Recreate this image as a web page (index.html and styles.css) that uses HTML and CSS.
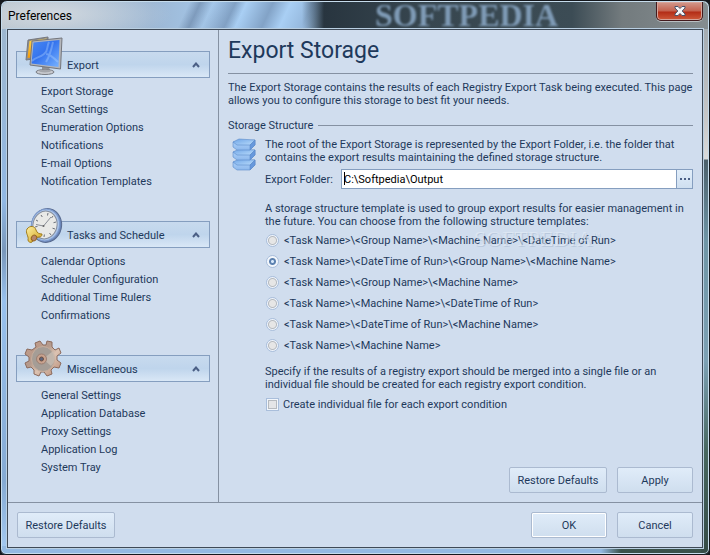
FILE: index.html
```html
<!DOCTYPE html>
<html lang="en">
<head>
<meta charset="utf-8">
<title>Preferences</title>
<link rel="stylesheet" href="styles.css">
</head>
<body>
<div class="window">
  <header class="titlebar">
    <span class="titlebar-name">Preferences</span>
    <span class="titlebar-ghost" aria-hidden="true">SOFTPEDIA</span>
    <button class="close" type="button" aria-label="Close">
      <svg width="12" height="10" viewBox="0 0 12 10"><path d="M1 .5h3l2 2 2-2h3v1.500L8.200 5 11 8v1.500H8l-2-2-2 2H1V8l2.800-3L1 2z" fill="#f4f4f6" stroke="#49536b" stroke-width="1"/></svg>
    </button>
  </header>
  <div class="client">
    <div class="columns">
      <nav class="sidebar" aria-label="Preference pages">
        <section class="group">
          <h2 class="group-head">
            <svg class="group-icon" width="40" height="40" viewBox="0 0 40 40">
              <defs>
                <linearGradient id="screen" x1="0" y1="0" x2="1" y2="1"><stop offset="0" stop-color="#4b8af2"/><stop offset=".45" stop-color="#3473ee"/><stop offset="1" stop-color="#79b4ff"/></linearGradient>
                <linearGradient id="amber" x1="0" y1="0" x2="0" y2="1"><stop offset="0" stop-color="#ffd84e"/><stop offset="1" stop-color="#f59a08"/></linearGradient>
              </defs>
              <path d="M4 4 24 1v20L2 24z" fill="#8b8c90" stroke="#77787d"/>
              <path d="M5.500 5 22.500 2.500v17L3.500 22z" fill="url(#amber)"/>
              <path d="M18 30h7l1 5h-8z" fill="#8f9195"/>
              <ellipse cx="21" cy="36" rx="9" ry="2.500" fill="#c9cbd0" stroke="#777a80"/>
              <ellipse cx="21" cy="35" rx="6" ry="1.500" fill="#a4a6ab"/>
              <path d="M8 5 38 2l-1.500 31L6 29z" fill="#b4b6bb" stroke="#74767c"/>
              <path d="M9.500 6.500 35.500 4 34.500 31 7.500 27.500z" fill="url(#screen)"/>
              <path d="M25 6c-3 6 0 8-5 12s-8 3-12 7M22 18c4 0 8 4 12 8M29 6c-2 9-3 14-7 20" fill="none" stroke="#b9dbff" stroke-width="2" stroke-opacity=".35"/>
            </svg>
            <button class="group-toggle" type="button" aria-expanded="true">Export
              <svg class="chevron" width="8" height="6" viewBox="0 0 8 6"><path d="M1 5l3-3.500L7 5" fill="none" stroke="#4b5f85" stroke-width="2"/></svg>
            </button>
          </h2>
          <ul class="links">
            <li><a href="#storage">Export Storage</a></li>
            <li><a href="#scan">Scan Settings</a></li>
            <li><a href="#enumeration">Enumeration Options</a></li>
            <li><a href="#notifications">Notifications</a></li>
            <li><a href="#email">E-mail Options</a></li>
            <li><a href="#templates">Notification Templates</a></li>
          </ul>
        </section>
        <section class="group">
          <h2 class="group-head">
            <svg class="group-icon" width="40" height="40" viewBox="0 0 40 40">
              <defs><linearGradient id="bell" x1="0" y1="0" x2="1" y2="1"><stop offset="0" stop-color="#fff0a0"/><stop offset="1" stop-color="#cfa01e"/></linearGradient></defs>
              <ellipse cx="22.500" cy="19.500" rx="15" ry="17" fill="#6b86b8" stroke="#586a8f" transform="rotate(14 22.500 19.500)"/>
              <ellipse cx="21.500" cy="19" rx="14" ry="16" fill="#a9c3ea" stroke="#7f9cce" transform="rotate(14 21.500 19)"/>
              <ellipse cx="21" cy="19" rx="12" ry="14" fill="#e9e9e7" stroke="#858d9c" transform="rotate(14 21 19)"/>
              <path d="M24 7l-.5 2.500M29 10l-1.500 2M32 16l-2.500.7M31 23l-2.500-.8M27 29l-1.500-2M20 31l.4-2.500M11 21l2.500-.6M12 14l2 1.200M17 9l1.300 2" stroke="#6c7079" fill="none"/>
              <path d="M27 11 19.500 20 12 18.500" stroke="#8b8f98" fill="none"/><circle cx="19.500" cy="20" r="1" fill="#666"/>
              <path d="M3 23c3-4 8-3 9 1 1 3 3 4 6 4 0 2-1 3-3 3-3 0-5 2-7 5-1 1-4 0-4-2 1-4-3-7-1-11z" fill="url(#bell)" stroke="#a07c1c"/>
              <ellipse cx="10" cy="32" rx="2.500" ry="3" fill="#b7846b" stroke="#96651f" transform="rotate(35 10 32)"/>
            </svg>
            <button class="group-toggle" type="button" aria-expanded="true">Tasks and Schedule
              <svg class="chevron" width="8" height="6" viewBox="0 0 8 6"><path d="M1 5l3-3.500L7 5" fill="none" stroke="#4b5f85" stroke-width="2"/></svg>
            </button>
          </h2>
          <ul class="links">
            <li><a href="#calendar">Calendar Options</a></li>
            <li><a href="#scheduler">Scheduler Configuration</a></li>
            <li><a href="#rulers">Additional Time Rulers</a></li>
            <li><a href="#confirmations">Confirmations</a></li>
          </ul>
        </section>
        <section class="group">
          <h2 class="group-head">
            <svg class="group-icon" width="40" height="40" viewBox="0 0 40 40">
              <defs><linearGradient id="gear" x1="0" y1="0" x2="1" y2="1"><stop offset="0" stop-color="#c69b87"/><stop offset=".4" stop-color="#b49a8c"/><stop offset=".6" stop-color="#dcc3b2"/><stop offset="1" stop-color="#b58873"/></linearGradient></defs>
              <path d="M12 7 11 3l5-2 3 4h3l1-4 5 1v5l3 3 4-2 2 5-4 3v4l4 3-2 5-5-1-3 3 1 4-5 2-3-4h-3l-2 4-5-2v-4l-3-3-4 1-2-5 4-2v-4l-4-3 2-5 5 1z" fill="url(#gear)" stroke="#8b6a5c" stroke-linejoin="round"/>
              <ellipse cx="19" cy="19" rx="11.500" ry="12.500" fill="#a59d96" stroke="#c6ad9c"/>
              <path d="M19 19 29 11c3 5 2 11-2 15z" fill="#cdc1b5" opacity=".7"/>
              <circle cx="17.500" cy="19" r="5" fill="#c8a28e" stroke="#9b7f72"/>
              <circle cx="17.500" cy="19" r="2" fill="#5b6680" stroke="#6e4f42"/>
            </svg>
            <button class="group-toggle" type="button" aria-expanded="true">Miscellaneous
              <svg class="chevron" width="8" height="6" viewBox="0 0 8 6"><path d="M1 5l3-3.500L7 5" fill="none" stroke="#4b5f85" stroke-width="2"/></svg>
            </button>
          </h2>
          <ul class="links">
            <li><a href="#general">General Settings</a></li>
            <li><a href="#database">Application Database</a></li>
            <li><a href="#proxy">Proxy Settings</a></li>
            <li><a href="#log">Application Log</a></li>
            <li><a href="#tray">System Tray</a></li>
          </ul>
        </section>
      </nav>
      <main class="page">
        <h1 class="page-title">Export Storage</h1>
        <p class="intro">The Export Storage contains the results of each Registry Export Task being executed. This page<br>allows you to configure this storage to best fit your needs.</p>
        <h2 class="section-title">Storage Structure</h2>
        <div class="section">
          <svg class="section-icon" width="28" height="34" viewBox="0 0 28 34">
            <defs>
              <linearGradient id="top" x1="0" y1="0" x2="1" y2="1"><stop offset="0" stop-color="#6ea4e6"/><stop offset="1" stop-color="#b9dbfb"/></linearGradient>
              <linearGradient id="face" x1="0" y1="0" x2="0" y2="1"><stop offset="0" stop-color="#b4d6fb"/><stop offset="1" stop-color="#8db8ec"/></linearGradient>
            </defs>
            <g stroke="#5d8cca" stroke-width=".6" stroke-linejoin="round">
              <path d="M2 24v5l4 3h13l5-5v-5z" fill="url(#face)"/><path d="M2 24l6-3 16 1-5 5H6z" fill="url(#top)"/><path d="M19 27v5l5-5v-5z" fill="#6798dc"/>
              <path d="M2 14v5l4 3h13l5-5v-5z" fill="url(#face)"/><path d="M2 14l6-3 16 1-5 5H6z" fill="url(#top)"/><path d="M19 17v5l5-5v-5z" fill="#6798dc"/>
              <path d="M2 4v5l4 3h13l5-5V2z" fill="url(#face)"/><path d="M2 4l6-3 16 1-5 5H6z" fill="url(#top)"/><path d="M19 7v5l5-5V2z" fill="#6798dc"/>
            </g>
          </svg>
          <div class="section-body">
            <p>The root of the Export Storage is represented by the Export Folder, i.e. the folder that<br>contains the export results maintaining the defined storage structure.</p>
            <div class="field">
              <label for="folder">Export Folder:</label>
              <div class="path-box">
                <input id="folder" type="text" value="C:\Softpedia\Output">
                <button type="button" class="browse" aria-label="Browse"><i></i><i></i><i></i></button>
              </div>
            </div>
            <p>A storage structure template is used to group export results for easier management in<br>the future. You can choose from the following structure templates:</p>
            <div class="choices" role="radiogroup" aria-label="Structure template">
              <label><input type="radio" name="template"><span>&lt;Task Name&gt;\&lt;Group Name&gt;\&lt;Machine Name&gt;\&lt;DateTime of Run&gt;</span></label>
              <label><input type="radio" name="template" checked><span>&lt;Task Name&gt;\&lt;DateTime of Run&gt;\&lt;Group Name&gt;\&lt;Machine Name&gt;</span></label>
              <label><input type="radio" name="template"><span>&lt;Task Name&gt;\&lt;Group Name&gt;\&lt;Machine Name&gt;</span></label>
              <label><input type="radio" name="template"><span>&lt;Task Name&gt;\&lt;Machine Name&gt;\&lt;DateTime of Run&gt;</span></label>
              <label><input type="radio" name="template"><span>&lt;Task Name&gt;\&lt;DateTime of Run&gt;\&lt;Machine Name&gt;</span></label>
              <label><input type="radio" name="template"><span>&lt;Task Name&gt;\&lt;Machine Name&gt;</span></label>
              <div class="watermark" aria-hidden="true">SOFTPEDIA<sup>™</sup></div>
            </div>
            <p>Specify if the results of a registry export should be merged into a single file or an<br>individual file should be created for each registry export condition.</p>
            <label class="check"><input type="checkbox"><span>Create individual file for each export condition</span></label>
          </div>
        </div>
        <div class="actions">
          <button type="button" class="btn btn-wide">Restore Defaults</button>
          <button type="button" class="btn">Apply</button>
        </div>
      </main>
    </div>
    <footer class="footer">
      <button type="button" class="btn btn-wide">Restore Defaults</button>
      <span class="spacer"></span>
      <button type="button" class="btn btn-default">OK</button>
      <button type="button" class="btn">Cancel</button>
    </footer>
  </div>
</div>
</body>
</html>
```
FILE: styles.css
```css
* { box-sizing: border-box; }
body {
  margin: 0;
  background: #15181d;
  color: #1e395b;
  font: 11px/13px Tahoma, Roboto, sans-serif;
}
h1, h2, p, ul { margin: 0; padding: 0; font: inherit; }
ul { list-style: none; }
button, input { font: inherit; color: inherit; }
.window {
  display: flex;
  flex-direction: column;
  min-height: 100vh;
  padding: 0 6px 6px;
  border: 1px solid #14171c;
  border-radius: 7px 7px 6px 6px;
  box-shadow: inset 0 0 0 1px #c6dcec;
  background:
    linear-gradient(#9aa3a9 0, #c8c8c8 120px, #dadada 158px, #4c606b 159px, #6f96a6 240px, #7da1b4 360px, #486860 450px, #354b46) right / 8px 100% no-repeat,
    linear-gradient(90deg, #93b9e2 600px, #3a524b 620px) bottom / 100% 8px no-repeat,
    linear-gradient(#9fb6cb, #91b8e4 200px, #7997ba 250px, #98c1ee 300px, #85aad3 480px, #a6cbf2) left / 8px 100% no-repeat,
    #9ebad3;
}
.titlebar {
  position: relative;
  display: flex;
  align-items: center;
  height: 27px;
  margin: 1px -5px 0;
  padding-left: 6px;
  border-radius: 6px 6px 0 0;
  background:
    radial-gradient(ellipse 120px 30px at 50px 12px, rgba(220, 224, 228, .8), transparent),
    linear-gradient(115deg, transparent 170px, rgba(72, 96, 130, .4) 180px, transparent 192px, rgba(72, 96, 130, .4) 212px, transparent 222px, rgba(72, 96, 130, .4) 246px, transparent 262px, rgba(72, 96, 130, .2) 282px, transparent 294px),
    linear-gradient(90deg, #b2bfca, #9cb7d4 150px, #a9cff4 240px, #a9cff4 300px, #28353f 322px, #37464f 420px, #3c4c55 570px, #737b7e 620px, #858d90);
}
.titlebar-name { position: relative; color: #000; font-size: 12px; line-height: 16px; }
.titlebar-ghost {
  position: absolute;
  left: 373px;
  top: 0;
  color: #7f9bb6;
  font: bold 32px/27px "Liberation Serif", serif;
  filter: blur(1px);
}
.close {
  position: absolute;
  top: 0;
  right: 5px;
  display: flex;
  align-items: center;
  justify-content: center;
  width: 47px;
  height: 19px;
  padding: 0;
  border: 1px solid #431a1d;
  border-top: 0;
  border-radius: 0 0 5px 5px;
  box-shadow: inset 0 0 0 1px #d6a49a, 0 1px 0 #b9bfc2;
  background: linear-gradient(#d29a8e, #c4614e 9px, #b32c16 10px, #ce5a3b);
}
.client {
  position: relative;
  display: flex;
  flex: 1;
  flex-direction: column;
  border: 1px solid #3f4a57;
  outline: 1px solid #b9cfe2;
  background: #d0ddee;
}
.columns { display: flex; flex: 1; }
.sidebar {
  display: flex;
  flex: 0 0 210px;
  flex-direction: column;
  gap: 30px;
  padding: 21px 8px 25px;
}
.group-head { position: relative; }
.group-icon { position: absolute; left: 8px; bottom: 2px; }
.group-toggle {
  display: flex;
  align-items: center;
  justify-content: space-between;
  width: 100%;
  height: 27px;
  padding: 1px 9px 0 50px;
  border: 1px solid #859ebf;
  border-radius: 0;
  background: linear-gradient(#c8daee, #bfd5ec 50%, #d9e7f6);
}
.links { padding: 5px 0 0 25px; line-height: 18px; }
.links a { color: inherit; text-decoration: none; }
.page {
  flex: 1;
  display: flex;
  flex-direction: column;
  min-width: 0;
  padding: 5px 9px 9px;
  border-left: 1px solid #8591a2;
}
.page-title {
  height: 39px;
  border-bottom: 1px solid #8591a2;
  font-size: 23px;
  line-height: 32px;
}
.intro { padding-top: 7px; }
.section-title {
  display: flex;
  align-items: center;
  gap: 5px;
  padding-top: 12px;
}
.section-title::after { content: ""; flex: 1; height: 1px; background: #8591a2; }
.section { display: flex; padding-top: 6px; }
.section-icon { flex: 0 0 28px; margin: 0 6px 0 3px; }
.section-body { flex: 1; min-width: 0; }
.field { display: flex; align-items: center; padding: 5px 0 13px; }
.field label { flex: 0 0 76px; }
.path-box {
  position: relative;
  display: flex;
  flex: 1;
  height: 20px;
  border: 1px solid #859ebf;
  background: #fff;
}
.path-box::before {
  content: "";
  position: absolute;
  left: 2px;
  top: 2px;
  width: 1px;
  height: 13px;
  background: #000;
}
.path-box input {
  flex: 1;
  min-width: 0;
  padding: 0 2px;
  border: 0;
  background: none;
  color: #000;
}
.browse {
  display: flex;
  align-items: center;
  justify-content: center;
  gap: 2px;
  width: 16px;
  padding: 0;
  border: 0;
  border-left: 1px solid #859ebf;
  background: linear-gradient(#e2eefa, #cfdff0);
}
.browse i { width: 2px; height: 2px; background: #4b5f85; }
.choices { position: relative; padding: 2px 0 9px; }
.choices label { display: flex; align-items: center; gap: 5px; height: 21px; }
input[type="radio"] {
  flex: none;
  appearance: none;
  width: 13px;
  height: 13px;
  margin: 0 0 0 1px;
  border: 1px solid #a9bedb;
  border-radius: 50%;
  background: radial-gradient(circle, #e6e6e6 0 3px, #b6babf 4px, #eef3fa 5px);
}
input[type="radio"]:checked { background: radial-gradient(circle, #d7e8fa 0 1px, #5d82b0 2px, #5d82b0 3px, #f2f6fb 4px); }
.watermark {
  position: absolute;
  left: 209px;
  top: 2px;
  color: rgba(233, 240, 249, .55);
  font: 22px/18px "Liberation Serif", serif;
  text-shadow: 1px 1px 0 rgba(130, 150, 180, .3);
  pointer-events: none;
}
.watermark sup { font-size: 8px; line-height: 8px; }
.check { display: flex; align-items: center; gap: 4px; padding-top: 7px; }
.check input {
  flex: none;
  appearance: none;
  width: 13px;
  height: 13px;
  margin: 0 0 0 1px;
  border: 1px solid #a9bedb;
  box-shadow: inset 0 0 0 1px #f2f6fb, inset 0 0 0 2px #b6babf;
  background: #e4e5e7;
}
.actions { display: flex; gap: 10px; justify-content: flex-end; margin-top: auto; }
.btn {
  width: 76px;
  height: 26px;
  padding: 0;
  border: 1px solid #abbad0;
  border-radius: 2px;
  background: linear-gradient(#e0ecf9, #cfdeee);
  text-align: center;
}
.btn-wide { width: 98px; }
.btn-default { box-shadow: inset 0 0 0 1px #fff; }
.footer {
  display: flex;
  gap: 10px;
  padding: 9px;
  border-top: 1px solid #8591a2;
}
.spacer { flex: 1; }
```
